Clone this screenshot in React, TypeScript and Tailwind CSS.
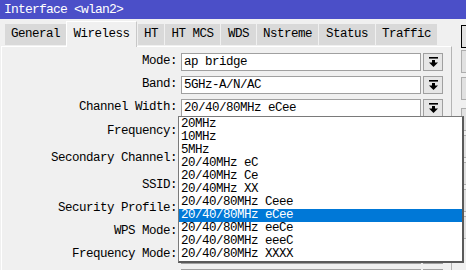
import React from "react";

const mono = { fontFamily: '"Liberation Mono", "DejaVu Sans Mono", monospace' };

function ArrowIcon() {
  return (
    <svg width="9" height="10" viewBox="0 0 9 10">
      <rect x="0" y="0" width="9" height="1.6" fill="#000" />
      <rect x="3" y="3" width="3" height="3" fill="#000" />
      <polygon points="0,5.5 9,5.5 4.5,10" fill="#000" />
    </svg>
  );
}

const rows: { label: string; value?: string; cls: string }[] = [
  { label: "Mode:", value: "ap bridge", cls: "h-[23px]" },
  { label: "Band:", value: "5GHz-A/N/AC", cls: "h-[23px]" },
  { label: "Channel Width:", value: "20/40/80MHz eCee", cls: "h-[23px]" },
  { label: "Frequency:", cls: "h-[24px]" },
  { label: "Secondary Channel:", cls: "h-[30px]" },
  { label: "SSID:", cls: "h-[24px]" },
  { label: "Security Profile:", cls: "h-[23px]" },
  { label: "WPS Mode:", cls: "h-[23px]" },
  { label: "Frequency Mode:", cls: "h-[23px]" },
  { label: "", cls: "h-[23px]" },
];

const tabs: { name: string; cls: string; sel?: boolean }[] = [
  { name: "General", cls: "w-[61px]" },
  { name: "Wireless", cls: "w-[71px]", sel: true },
  { name: "HT", cls: "w-[26px] ml-[1px]" },
  { name: "HT MCS", cls: "w-[55px] ml-[1px]" },
  { name: "WDS", cls: "w-[35px] ml-[1px]" },
  { name: "Nstreme", cls: "w-[61px] ml-[1px]" },
  { name: "Status", cls: "w-[56px] ml-[1px]" },
  { name: "Traffic", cls: "w-[61px] ml-[1px]" },
];

const items = [
  "20MHz",
  "10MHz",
  "5MHz",
  "20/40MHz eC",
  "20/40MHz Ce",
  "20/40MHz XX",
  "20/40/80MHz Ceee",
  "20/40/80MHz eCee",
  "20/40/80MHz eeCe",
  "20/40/80MHz eeeC",
  "20/40/80MHz XXXX",
];

export default function App() {
  return (
    <div
      className="relative w-[466px] h-[270px] overflow-hidden bg-[#f0f0f0] text-[12.5px] tracking-[-0.5px] text-black"
      style={mono}
    >
      <div className="h-[19px] bg-[#4b4fc8] text-white pl-[4px] leading-[19px] text-[13px] tracking-[-0.8px]">
        Interface &lt;wlan2&gt;
      </div>
      <div className="flex">
        <div className="w-[452px] shrink-0">
          <div className="h-[27px] flex items-end pl-[5px]">
            {tabs.map((t) =>
              t.sel ? (
                <div
                  key={t.name}
                  className={`${t.cls} h-[26px] -mb-[1px] relative z-10 bg-[#f0f0f0] border-t border-l border-white border-r border-r-[#c8c8c8] flex items-center justify-center`}
                >
                  {t.name}
                </div>
              ) : (
                <div
                  key={t.name}
                  className={`${t.cls} h-[21px] mb-[1px] bg-[#d9d9d9] flex items-center justify-center`}
                >
                  {t.name}
                </div>
              )
            )}
          </div>
          <div className="ml-[1px] w-[451px] h-[230px] border-t border-l border-white border-r border-r-[#b4b4b4] pt-[3px]">
            {rows.map((r, i) => (
              <div key={i} className={`${r.cls} flex items-center`}>
                <div className="w-[175px] text-right whitespace-pre">{r.label}</div>
                <div className="ml-[4px] w-[240px] h-[18px] bg-white border border-[#a0a0a0] pl-[2px] leading-[16px] whitespace-pre overflow-hidden">
                  {r.value ?? ""}
                </div>
                <div className="ml-[2px] w-[20px] h-[18px] bg-[#e6e6e6] border border-[#a0a0a0] flex items-center justify-center">
                  <ArrowIcon />
                </div>
              </div>
            ))}
          </div>
        </div>
        <div className="pl-[9px] pt-[6px] flex flex-col shrink-0">
          <div className="w-[80px] h-[23px] border border-black bg-[#e1e1e1]" />
          <div className="mt-[2px] w-[80px] h-[23px] border border-[#adadad] bg-[#e1e1e1]" />
          <div className="mt-[4px] w-[80px] h-[23px] border border-[#adadad] bg-[#e1e1e1]" />
          <div className="mt-[8px] w-[80px] h-[23px] border border-[#adadad] bg-[#e1e1e1]" />
          <div className="mt-[4px] w-[80px] h-[23px] border border-[#adadad] bg-[#e1e1e1]" />
          <div className="mt-[4px] w-[80px] h-[23px] border border-[#adadad] bg-[#e1e1e1]" />
          <div className="mt-[4px] w-[80px] h-[23px] border border-[#adadad] bg-[#e1e1e1]" />
          <div className="mt-[4px] w-[80px] h-[23px] border border-[#adadad] bg-[#e1e1e1]" />
        </div>
      </div>
      <div className="absolute left-[178px] top-[116px] w-[286px] h-[147px] bg-white border-t border-l border-[#7a7a7a] border-r-2 border-b-2 border-r-[#5a5a5a] border-b-[#5a5a5a] pt-[1px]">
        {items.map((it) => (
          <div
            key={it}
            className={`h-[13px] leading-[13px] pl-[2px] whitespace-pre ${
              it === "20/40/80MHz eCee" ? "bg-[#0078d7] text-white" : ""
            }`}
          >
            {it}
          </div>
        ))}
      </div>
    </div>
  );
}
